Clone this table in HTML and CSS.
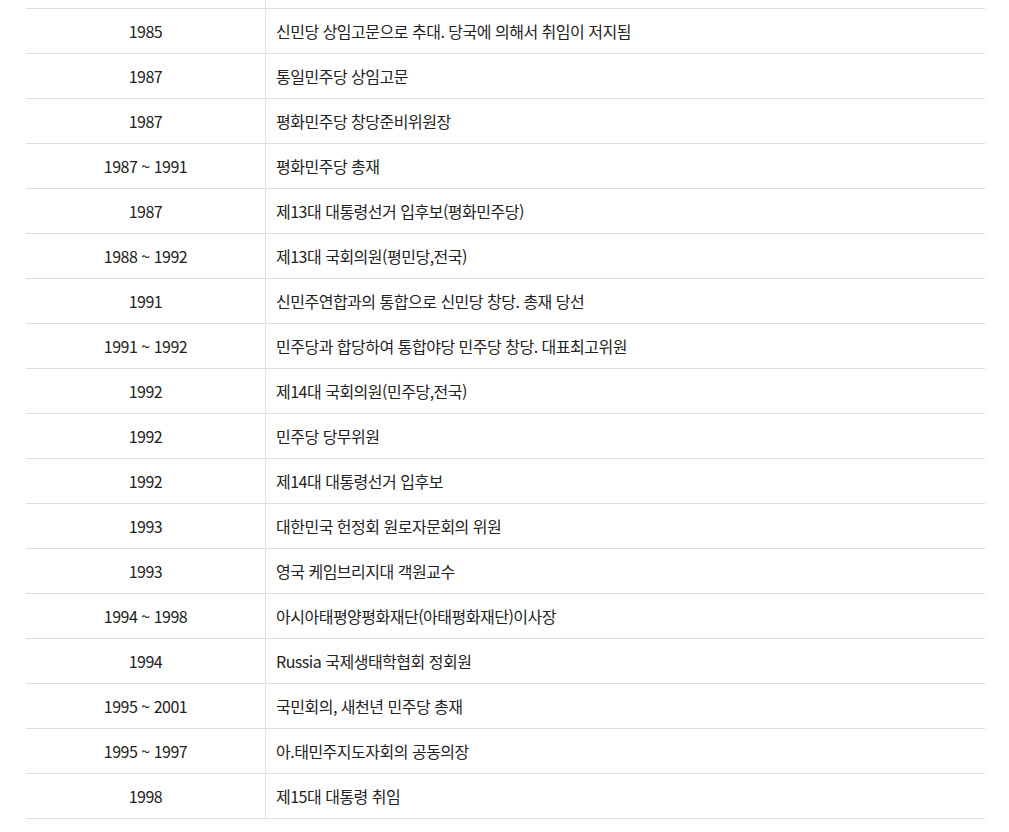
FILE: index.html
```html
<!DOCTYPE html>
<html lang="ko">
<head>
<meta charset="utf-8">
<title>약력</title>
<link rel="stylesheet" href="styles.css">
</head>
<body>
<table class="history">
  <tbody>
    <tr class="cut"><td class="year"></td><td class="desc"></td></tr>
    <tr><td class="year">1985</td><td class="desc">신민당 상임고문으로 추대. 당국에 의해서 취임이 저지됨</td></tr>
    <tr><td class="year">1987</td><td class="desc">통일민주당 상임고문</td></tr>
    <tr><td class="year">1987</td><td class="desc">평화민주당 창당준비위원장</td></tr>
    <tr><td class="year">1987 ~ 1991</td><td class="desc">평화민주당 총재</td></tr>
    <tr><td class="year">1987</td><td class="desc">제13대 대통령선거 입후보(평화민주당)</td></tr>
    <tr><td class="year">1988 ~ 1992</td><td class="desc">제13대 국회의원(평민당,전국)</td></tr>
    <tr><td class="year">1991</td><td class="desc">신민주연합과의 통합으로 신민당 창당. 총재 당선</td></tr>
    <tr><td class="year">1991 ~ 1992</td><td class="desc">민주당과 합당하여 통합야당 민주당 창당. 대표최고위원</td></tr>
    <tr><td class="year">1992</td><td class="desc">제14대 국회의원(민주당,전국)</td></tr>
    <tr><td class="year">1992</td><td class="desc">민주당 당무위원</td></tr>
    <tr><td class="year">1992</td><td class="desc">제14대 대통령선거 입후보</td></tr>
    <tr><td class="year">1993</td><td class="desc">대한민국 헌정회 원로자문회의 위원</td></tr>
    <tr><td class="year">1993</td><td class="desc">영국 케임브리지대 객원교수</td></tr>
    <tr><td class="year">1994 ~ 1998</td><td class="desc">아시아태평양평화재단(아태평화재단)이사장</td></tr>
    <tr><td class="year">1994</td><td class="desc">Russia 국제생태학협회 정회원</td></tr>
    <tr><td class="year">1995 ~ 2001</td><td class="desc">국민회의, 새천년 민주당 총재</td></tr>
    <tr><td class="year">1995 ~ 1997</td><td class="desc">아.태민주지도자회의 공동의장</td></tr>
    <tr><td class="year">1998</td><td class="desc">제15대 대통령 취임</td></tr>
  </tbody>
</table>
</body>
</html>
```

FILE: styles.css
```css
html, body {
  margin: 0;
  padding: 0;
  background: #fff;
}

body {
  font-family: "Noto Sans CJK KR", "Noto Sans", sans-serif;
  font-size: 16px;
  color: #222;
}

.history {
  margin-left: 26px;
  width: 959px;
  border-collapse: collapse;
  table-layout: fixed;
}

.history td {
  height: 44px;
  padding: 0;
  border-bottom: 1px solid #dedede;
  vertical-align: middle;
  line-height: 20px;
  letter-spacing: -0.5px;
}

.history .year {
  width: 239px;
  text-align: center;
  border-right: 1px solid #e3e3e3;
}

.history .desc {
  padding-left: 10px;
  text-align: left;
}

.history tr.cut td {
  height: 8px;
}
```
